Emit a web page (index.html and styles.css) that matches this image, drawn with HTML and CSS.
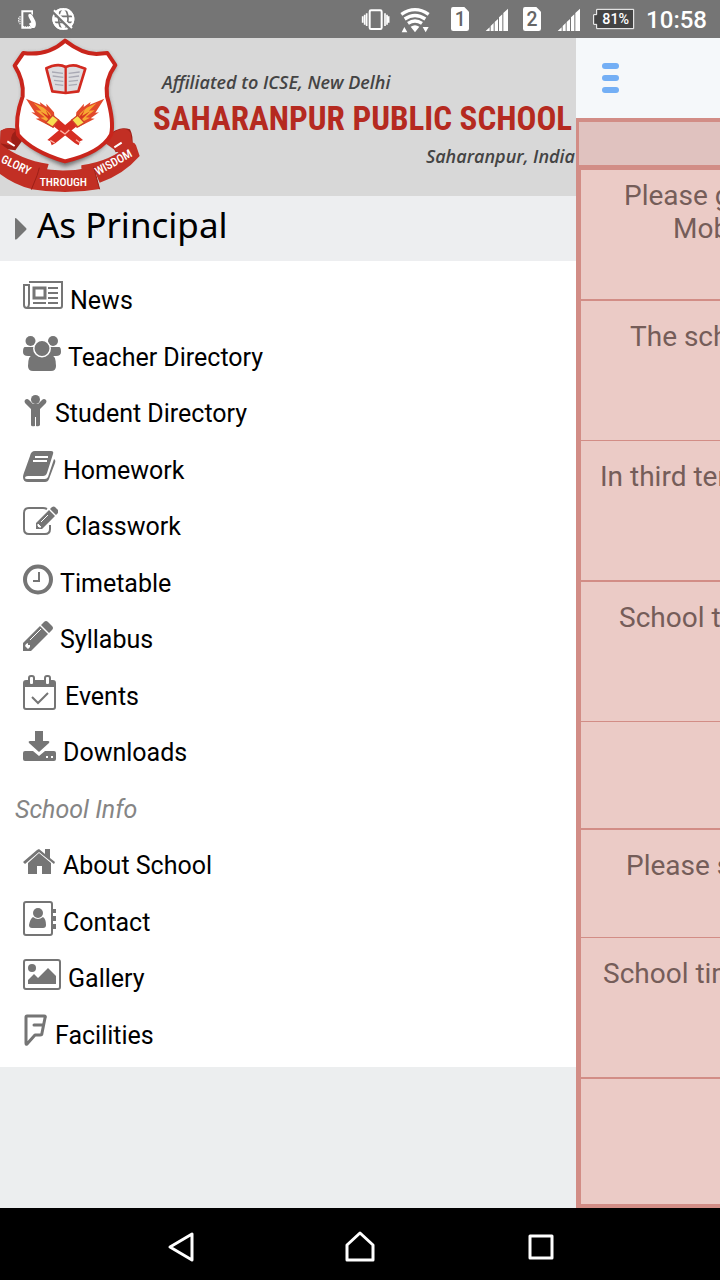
FILE: index.html
```html
<!DOCTYPE html>
<html lang="en">
<head>
<meta charset="utf-8">
<meta name="viewport" content="width=device-width, initial-scale=1">
<title>Saharanpur Public School</title>
<link rel="stylesheet" href="styles.css">
</head>
<body>
<div class="status">
  <svg class="status-icons" width="80" height="38" viewBox="0 0 240 114" fill="#fff">
    <path d="M64 31h35v14l-5-4v-4H70v41h21l4 8H64z"/>
    <path d="M86 43c4-4 9 0 12 5l8 15c3 8 2 17-3 21h-9l-7-13 7-4-7-14c-2-4-3-7-1-10z"/>
    <path d="M60 48v25M56 53v15" stroke="#fff" stroke-width="3" stroke-dasharray="5 2" fill="none"/>
    <path d="M73 79h14" stroke="#757575" stroke-width="3" stroke-dasharray="3 2"/>
    <circle cx="190" cy="57" r="33"/>
    <g fill="none" stroke="#757575" stroke-width="5"><ellipse cx="190" cy="57" rx="14" ry="31"/><path d="M158 49h64M162 67h56"/></g>
    <circle cx="190" cy="57" r="30" fill="none" stroke="#fff" stroke-width="6"/>
    <path d="M158 35l58 56" stroke="#757575" stroke-width="9"/>
    <path d="M162 31l54 53" stroke="#fff" stroke-width="6"/>
  </svg>
  <div class="status-right">
    <svg class="status-icons" width="276" height="38" viewBox="30 0 828 114" fill="#fff">
      <g fill="none" stroke="#fff"><rect x="59" y="31" width="36" height="56" rx="4" stroke-width="6"/><path stroke-width="5" d="M50 40v38M105 40v38M44 44v30M111 44v30M38 49v19M116 49v19"/></g>
      <g fill="none" stroke="#fff" stroke-width="10"><path d="M154 43q41-28 82 0M164 57q31-21 62 0M174 70q21-14 42 0"/></g>
      <path d="M182 80q13-9 26 0l-13 17zM155 97l8-16 9 16zM218 81h18l-9 16z"/>
      <path d="M309 21h34l14 14v51q0 7-7 7h-40q-7 0-7-7V28q0-7 6-7z"/>
      <path id="sig" d="M407 93l12-11v11zM422 93V78l9-9v24zM434 93V66l10-9v36zM447 93V52l10-9v50zM460 93V39l14-13v67z"/>
      <path d="M525 21h34l14 14v51q0 7-7 7h-40q-7 0-7-7V28q0-7 6-7z"/>
      <use href="#sig" x="216"/>
      <path d="M740 28h111v58H740V73h-9V44h9z" fill="#444" stroke="#fff" stroke-width="3"/>
      <g class="status-num" text-anchor="middle"><text x="331" y="79" fill="#666">1</text><text x="546" y="79" fill="#666">2</text></g>
      <text class="status-pct" x="797" y="73" text-anchor="middle">81%</text>
    </svg>
    <span class="clock">10:58</span>
  </div>
</div>

<main class="app">
  <aside class="drawer">
    <header class="banner">
      <svg class="crest" width="140" height="158" viewBox="0 6 420 474">
        <defs><filter id="soft" x="-20%" y="-20%" width="140%" height="140%"><feGaussianBlur stdDeviation="7"/></filter></defs>
        <path d="M195 14q52 40 94 40l33-3 27 38q-32 45-25 92 22 77 12 115-30 60-141 96Q95 352 58 300q-10-50 10-119 5-46-24-92l26-38q77 10 125-37z" fill="#444" opacity=".7" filter="url(#soft)"/>
        <path d="M2 284q25-16 61-1l6 28-23 32-46-6zM322 300q35-32 68-20 11 22 7 52l-50 17z" fill="#9c1f17"/>
        <path d="M0 322q60 50 146 62l-10 34-42 41Q44 447 0 414zM94 460l10-29q7-11 14-34 80 14 163-4l18 66q-100 18-205 1z" fill="#c22f24"/>
        <path d="M244 388q90-12 148-66 10-7 16 6l11 32q-50 57-120 80l-15-35-40-7zM2 284q25-16 44 0-22 18-5 46l-41-8z" fill="#c22f24"/>
        <path d="M316 322q15-38 50-44 25-1 27 20l6 36-38 20z" fill="#c22f24"/>
        <path d="M94 461l17-42q4-12 7-24M299 460l-18-67" fill="none" stroke="#9c1f17" stroke-width="3"/>
        <path d="M195 14q52 40 94 40l33-3 24 36q-32 45-25 94 22 77 12 115-30 55-138 80Q95 346 54 296q-10-50 14-115 5-46-24-92l26-38q73 10 125-37z" fill="#fff" stroke="#c9251c" stroke-width="12" stroke-linejoin="round"/>
        <path d="M139 97l17-7q25-6 41 3 21-9 42-1l17 6-21 68-38 5-40-5z" fill="#dcdcdf" stroke="#d22a20" stroke-width="8" stroke-linejoin="round"/>
        <path d="M197 92v80" stroke="#d22a20" stroke-width="7"/>
        <path d="M156 108l33 4M158 120l32 4M162 133l28 3M165 145l25 3M206 112l33-4M206 124l31-4M206 136l28-3M206 148l25-3" stroke="#a9a9b4" stroke-width="4"/>
        <g id="torch"><path d="M155 266l20-16 74 62-9 4-4 12-11-6z" fill="#d62e22"/>
          <path d="M145 268L107 248l12-1-25-18 11 1-27-42 44 18-3-8 21 15-1-10 23 26 2 22 7 7-10 18z" fill="#e2492b"/>
          <path d="M146 259l-25-14 13-1-27-21 17 1-23-23 30 14 19 17 10 22z" fill="#f7a833"/><path d="M147 251l-26-25 24 14-8-18 20 25z" fill="#d8371f"/>
          <path d="M137 260l21-22 18 14-18 21z" fill="#f8df52" stroke="#d0402a" stroke-width="4"/></g>
        <use href="#torch" transform="matrix(-1 0 0 1 391 0)"/>
        <path d="M181 284l14 10 13-12M151 313l13 8M228 311l13 10" stroke="#ffb2a4" stroke-width="4" fill="none"/>
        <path d="M22 316l22 14M343 334l22-14" stroke="#fff" stroke-width="6"/>
        <g class="crest-text"><text transform="translate(1 378) rotate(25)">GLORY</text><text x="119" y="449">THROUGH</text><text transform="translate(293 419) rotate(-29)">WISDOM</text></g>
      </svg>
      <div class="banner-text">
        <p class="affil">Affiliated to ICSE, New Delhi</p>
        <h1 class="school">SAHARANPUR PUBLIC SCHOOL</h1>
        <p class="place">Saharanpur, India</p>
      </div>
    </header>
    <button class="role" type="button"><svg width="12" height="22" viewBox="0 0 12 22"><path d="M0 1q0-2 2 0l9 9q1 1 0 2l-9 9q-2 1-2 0z" fill="#757575"/></svg><span>As Principal</span></button>
    <nav>
      <ul class="menu">
        <li><a href="#"><svg width="40" height="40" viewBox="0 0 40 40" fill="none" stroke="#757575" stroke-width="2"><path d="M6 6h33v24q0 2-2 2H4q-3 0-3-3V9h5v19q0 3-2 4"/><rect x="11" y="12" width="11" height="10" stroke-width="3"/><path d="M25 12h10M25 17h10M25 22h10M25 27h10M10 27h13"/></svg>News</a></li>
        <li><a href="#"><svg width="38" height="40" viewBox="0 0 38 40" fill="#757575"><circle cx="7.500" cy="8" r="5"/><circle cx="30" cy="8" r="5"/><path d="M2 14h10v9H5q-5 0-5-4 0-5 2-5zM36 14H26v9h7q5 0 5-4 0-5-2-5z"/><path d="M11 21h16q6 1 6 12 0 5-5 5H10q-5 0-5-5 0-11 6-12z"/><circle cx="19" cy="15.500" r="8.200" stroke="#fff" stroke-width="1.500"/></svg>Teacher Directory</a></li>
        <li><a href="#"><svg width="25" height="40" viewBox="0 0 25 40" fill="#757575"><circle cx="12.500" cy="10.500" r="4.500"/><path d="M2 11q2-2 4 0l4 4h5l4-4q2-2 4 0 1 1 0 3l-6 6v16q-1 2-4 1v-9h-1v9q-4 1-4-1V20l-6-6q-1-2 0-3z"/></svg>Student Directory</a></li>
        <li><a href="#"><svg width="33" height="40" viewBox="0 0 33 40"><path d="M12 5h16q3 0 2 3l-6 19q-1 3-4 3H5q-3 0-3 2 0 1 2 1h18q2 0 3-2l6-18q2 1 1 4l-6 16q-1 3-4 3H5q-5 0-5-5 0-2 2-7l5-14q1-5 5-5z" fill="#757575"/><path d="M12 11h13M10 15h14" stroke="#fff" stroke-width="2"/></svg>Homework</a></li>
        <li><a href="#"><svg width="35" height="40" viewBox="0 0 35 40"><path d="M24 7q-2-1-4-1H6q-5 0-5 5v16q0 5 5 5h16q5 0 5-5v-4" fill="none" stroke="#757575" stroke-width="2"/><path d="M13 21L26 8l6 6-13 13h-6zM27 7l2-2q2-1 3 0l3 3q1 2 0 3l-2 2z" fill="#757575"/><path d="M15 22l3 3h-2l-1-1zM18 20l7-7" stroke="#fff" stroke-width="1" fill="#fff"/></svg>Classwork</a></li>
        <li><a href="#"><svg width="30" height="40" viewBox="0 0 30 40" fill="none" stroke="#757575"><circle cx="15" cy="20.500" r="13" stroke-width="4"/><path d="M16 13v9h-6" stroke-width="2"/></svg>Timetable</a></li>
        <li><a href="#"><svg width="30" height="40" viewBox="0 0 30 40"><path d="M0 28L17 11l8 8L8 36H0zM18 10l3-3q2-2 4 0l4 4q2 2 0 4l-3 3z" fill="#757575"/><path d="M3 29l2-1v2h2v2l-2 2-3-3z" fill="#fff"/><path d="M7 25l11-11" stroke="#fff" stroke-width="1"/></svg>Syllabus</a></li>
        <li><a href="#"><svg width="35" height="40" viewBox="0 0 35 40"><rect x="1" y="9" width="31" height="28" rx="2" fill="#fff" stroke="#757575" stroke-width="2"/><path d="M1 9h31v6H1z" fill="#757575"/><g fill="#fff" stroke="#757575" stroke-width="2"><rect x="6" y="4" width="5" height="9" rx="2"/><rect x="22" y="4" width="5" height="9" rx="2"/></g><path d="M9 25l6 6 10-10" fill="none" stroke="#757575" stroke-width="2"/></svg>Events</a></li>
        <li><a href="#"><svg width="33" height="40" viewBox="0 0 33 40"><path d="M12 3h8v10h5q2 0 1 2l-10 9-10-9q-1-2 1-2h5zM2 23h8l6 5 6-5h9q2 0 2 2v6q0 2-2 2H2q-2 0-2-2v-6q0-2 2-2z" fill="#757575"/><path d="M23 28h2v2h-2zM28 28h2v2h-2z" fill="#fff"/></svg>Downloads</a></li>
        <li class="group">School Info</li>
        <li><a href="#"><svg width="33" height="40" viewBox="0 0 33 40" fill="#757575"><path d="M16 12l12 10v11h-9v-8h-5v8H5V22z"/><path d="M16 8l6 5V8h5v9l5 4-1 2-15-12L2 23l-2-2L14 9z"/></svg>About School</a></li>
        <li><a href="#"><svg width="33" height="40" viewBox="0 0 33 40"><rect x="1" y="4" width="28" height="33" rx="2" fill="none" stroke="#757575" stroke-width="2"/><path d="M30 11h3v4h-3zM30 18h3v5h-3zM30 26h3v5h-3z" fill="#757575"/><circle cx="15" cy="15" r="5" fill="#757575"/><path d="M10 19q5 4 10 0 3 2 3 8 0 3-3 3H9q-3 0-3-3 1-6 4-8z" fill="#757575"/></svg>Contact</a></li>
        <li><a href="#"><svg width="38" height="40" viewBox="0 0 38 40"><rect x="1" y="6" width="36" height="29" rx="2" fill="none" stroke="#757575" stroke-width="2"/><circle cx="9" cy="14" r="4" fill="#757575"/><path d="M5 30v-4l6-6 4 4 10-10 8 8v8z" fill="#757575"/></svg>Gallery</a></li>
        <li><a href="#"><svg width="25" height="40" viewBox="0 0 25 40" fill="none" stroke="#757575" stroke-width="3" stroke-linejoin="round"><path d="M4 5h17q2 0 1 2l-3 15q0 2-2 2h-5L4 33q-1 1-1-1V6q0-1 1-1zM11 14h9" stroke-linecap="round"/></svg>Facilities</a></li>
      </ul>
    </nav>
  </aside>

  <section class="page">
    <div class="page-bar"><button class="burger" type="button" aria-label="Menu"><span></span><span></span><span></span></button></div>
    <div class="notices-head"></div>
    <ul class="notices">
      <li class="first"><p class="in-43">Please g</p><p class="in-92">Mob</p></li>
      <li class="thin"><p class="in-49">The sch</p></li>
      <li class="tall"><p class="in-19">In third ter</p></li>
      <li class="thin"><p class="in-38">School t</p></li>
      <li class="short"></li>
      <li class="short thin"><p class="in-45">Please s</p></li>
      <li class="tall"><p class="in-22">School tim</p></li>
      <li class="last"></li>
    </ul>
  </section>
</main>

<footer class="keys">
  <button type="button" aria-label="Back"><svg width="32" height="32" viewBox="0 0 32 32"><path d="M28 4v26L6 17z"/></svg></button>
  <button type="button" aria-label="Home"><svg width="32" height="32" viewBox="0 0 32 32"><path d="M16 3l13 12v15H3V15z"/></svg></button>
  <button type="button" aria-label="Recent apps"><svg width="32" height="32" viewBox="0 0 32 32"><path d="M6 6h22v22H6z"/></svg></button>
</footer>
</body>
</html>
```

FILE: styles.css
```css
* { box-sizing: border-box; }
body {
  margin: 0;
  min-height: 100vh;
  display: flex;
  flex-direction: column;
  font-family: Roboto, sans-serif;
  color: #000;
}
p, h1, ul { margin: 0; padding: 0; }
ul { list-style: none; }
button { border: 0; padding: 0; background: none; font: inherit; color: inherit; }
svg { display: block; flex: none; }

.status {
  display: flex;
  justify-content: space-between;
  height: 38px;
  background: #757575;
  color: #fff;
}
.status-right { display: flex; align-items: center; padding-right: 13px; gap: 10px; }
.status-num { font: 500 58px Roboto, sans-serif; }
.status-pct { font: 500 43px Roboto, sans-serif; }
.clock { padding-top: 2px; font-size: 24px; font-weight: 500; line-height: 36px; }

.app { display: flex; flex: 1; }
.drawer { width: 80%; flex: none; background: #eceeef; }
.banner {
  display: flex;
  background: #d8d8d8;
  overflow: hidden;
}
.banner-text { flex: 1; min-width: 0; padding: 32px 1px 0 13px; white-space: nowrap; }
.crest-text { font: 500 35px "Roboto Condensed", "Liberation Sans Narrow", sans-serif; fill: #fff; }
.affil, .place {
  font: italic 600 18px/24px "Open Sans", sans-serif;
  color: #444;
}
.affil { padding-left: 9px; }
.place { text-align: right; }
.school {
  font: 700 33px/50px "Roboto Condensed", "Liberation Sans Narrow", sans-serif;
  color: #b52a20;
}
.role {
  display: flex;
  align-items: center;
  gap: 10px;
  width: 100%;
  height: 65px;
  padding: 0 15px;
  background: #edeef0;
  font: 35px/56px "Noto Sans", sans-serif;
}
.role span { padding-bottom: 8px; }

.menu { padding: 12px 0 3px; background: #fff; font-size: 25px; }
.menu li { height: 56px; line-height: 56px; }
.menu li:nth-child(odd) { height: 57px; }
.menu a {
  display: flex;
  align-items: center;
  gap: 7px;
  padding-left: 23px;
  color: #000;
  text-decoration: none;
}
.menu a svg { margin-bottom: 10px; }
.menu .group { padding-left: 15px; font-style: italic; color: #858585; }

.page {
  flex: 1;
  min-width: 0;
  display: flex;
  flex-direction: column;
  overflow: hidden;
  background: #f5f8fa;
}
.page-bar { height: 80px; padding: 25px 26px 0; }
.burger { display: grid; gap: 6px; width: 17px; }
.burger span { height: 6px; border-radius: 3px; background: #73aff5; }
.notices-head { height: 47px; background: #e0c2bf; border: solid #d28d86; border-width: 4px 0 0 3px; }
.notices {
  flex: 1;
  display: flex;
  flex-direction: column;
  border: solid #d28d86;
  border-width: 5px 0 4px 5px;
  background: #ebcbc6;
  color: #755d59;
  font-size: 28px;
  line-height: 33px;
  white-space: nowrap;
}
.notices li { min-height: 140px; padding-top: 19px; border-bottom: 2px solid #d28d86; }
.notices .first { min-height: 131px; padding-top: 9px; }
.notices .tall { min-height: 141px; }
.notices .short { min-height: 108px; }
.notices .thin { border-bottom-width: 1px; }
.notices .last { min-height: 0; flex: 1; border-bottom: 0; }
.in-19 { padding-left: 19px; }
.in-22 { padding-left: 22px; }
.in-38 { padding-left: 38px; }
.in-43 { padding-left: 43px; }
.in-45 { padding-left: 45px; }
.in-49 { padding-left: 49px; }
.in-92 { padding-left: 92px; }

.keys {
  display: flex;
  justify-content: center;
  gap: 148px;
  padding: 22px 0 18px;
  background: #000;
}
.keys path { fill: none; stroke: #fff; stroke-width: 3; stroke-linejoin: round; }
```
